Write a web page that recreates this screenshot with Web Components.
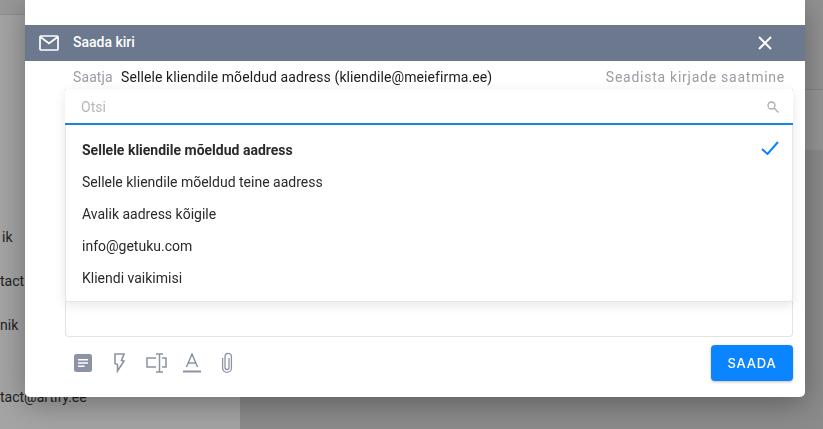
<!DOCTYPE html>
<html>
<head>
<meta charset="utf-8">
<style>
    html, body { margin: 0; height: 100%; overflow: hidden; }
    body { font-family: Roboto, 'Liberation Sans', sans-serif; }
</style>
</head>
<body>
<page-behind>
    <span style="margin-left:2px">ik</span>
    <span>tact</span>
    <span>nik</span>
    <span>tact@artify.ee</span>
</page-behind>
<mail-modal>
    <sender-menu slot="menu">
        <menu-item selected>Sellele kliendile mõeldud aadress</menu-item>
        <menu-item>Sellele kliendile mõeldud teine aadress</menu-item>
        <menu-item>Avalik aadress kõigile</menu-item>
        <menu-item>info@getuku.com</menu-item>
        <menu-item>Kliendi vaikimisi</menu-item>
    </sender-menu>
</mail-modal>

<script>
class page_Behind extends HTMLElement {
    constructor() {
        super();
        this.attachShadow({ mode: 'open' });
    }

    connectedCallback(){
        this.shadowRoot.innerHTML = `
            <style>
                :host {
                    display: flex;
                    height: 429px;
                    color: #222;
                    font-size: 14px;
                }
                .side {
                    width: 240px;
                    background: #a4a4a4;
                }
                .top {
                    height: 14px;
                    background: #989898;
                    border-bottom: 1px solid #8e8e8e;
                }
                .rows {
                    display: grid;
                    grid-template-rows: 44px 44px 72px 44px;
                    padding-top: 211px;
                    overflow: hidden;
                }
                ::slotted(span) { line-height: 22px; }
                .main {
                    flex: 1;
                    display: flex;
                    flex-direction: column;
                    background: #8b8b8b;
                }
                .bar {
                    height: 89px;
                    background: #929292;
                    border-bottom: 1px solid #848484;
                }
                .sub {
                    height: 60px;
                    background: #959595;
                }
            </style>
            <div class="side">
                <div class="top"></div>
                <div class="rows"><slot></slot></div>
            </div>
            <div class="main">
                <div class="bar"></div>
                <div class="sub"></div>
            </div>
        `;
    }
}

class mail_Modal extends HTMLElement {
    constructor() {
        super();
        this.attachShadow({ mode: 'open' });
    }

    connectedCallback(){
        this.shadowRoot.innerHTML = `
            <style>
                :host {
                    position: fixed;
                    left: 25px;
                    top: 0;
                    width: 780px;
                    height: 397px;
                    display: flex;
                    flex-direction: column;
                    background: #fff;
                    border-radius: 0 0 5px 5px;
                    box-shadow: 0 6px 30px rgba(0,0,0,.33);
                }
                .gap { height: 25px; }
                header {
                    height: 36px;
                    display: flex;
                    align-items: center;
                    background: #6b788e;
                    color: #fff;
                    font-size: 14px;
                    font-weight: 500;
                    padding: 0 32px 0 14px;
                }
                header .title { margin-left: 14px; flex: 1; padding-bottom: 2px; }
                .from {
                    height: 28px;
                    box-sizing: border-box;
                    display: flex;
                    align-items: center;
                    padding: 4px 20px 0 48px;
                    font-size: 14px;
                    color: #1c1c1c;
                }
                .from .label { color: #9a9ca3; width: 48px; letter-spacing: .1px; }
                .from .addr { flex: 1; letter-spacing: .1px; }
                .from .setup { color: #9a9ca3; letter-spacing: .75px; }
                .body {
                    position: relative;
                    margin: 0 12px 0 40px;
                    border: 1px solid #e3e3e3;
                    border-top: 0;
                    border-radius: 0 0 4px 4px;
                    height: 247px;
                    flex: none;
                }
                footer {
                    flex: 1;
                    display: flex;
                    align-items: center;
                    justify-content: space-between;
                    padding: 8px 12px 16px 49px;
                }
                .tools { display: flex; align-items: center; gap: 20px; color: #8b93a5; }
                .tools svg { display: block; }
                button {
                    width: 82px;
                    height: 36px;
                    border: 0;
                    border-radius: 4px;
                    background: #0a84ff;
                    color: #fff;
                    font: 500 13px Inter, Roboto, sans-serif;
                    letter-spacing: .8px;
                    box-shadow: 0 1px 3px rgba(0,0,0,.25);
                }
                .menu-place { position: absolute; left: -1px; right: -1px; top: 0; }
            </style>
            <div class="gap"></div>
            <header>
                <svg width="20" height="16" viewBox="0 0 20 16" fill="none" stroke="#fff" stroke-width="1.7"><rect x="1" y="1" width="18" height="14" rx="1"/><path d="M1.5 2l8.5 6.5L18.500 2"/></svg>
                <span class="title">Saada kiri</span>
                <svg width="16" height="16" viewBox="0 0 16 16" fill="none" stroke="#fff" stroke-width="2"><path d="M2 2l12 12M14 2L2 14"/></svg>
            </header>
            <div class="from">
                <span class="label">Saatja</span>
                <span class="addr">Sellele kliendile mõeldud aadress (kliendile@meiefirma.ee)</span>
                <span class="setup">Seadista kirjade saatmine</span>
            </div>
            <div class="body">
                <div class="menu-place"><slot name="menu"></slot></div>
            </div>
            <footer>
                <div class="tools">
                    <svg width="18" height="18" viewBox="0 0 18 18"><rect width="18" height="18" rx="2.500" fill="currentColor"/><path d="M4 5h10v1.600H4zM4 8.200h10v1.600H4zM4 11.400h6.500V13H4z" fill="#fff"/></svg>
                    <svg style="margin:0 1px 0 2px" width="11" height="20" viewBox="0 0 11 20" fill="none" stroke="currentColor" stroke-width="1.600"><path d="M1 1h9L7.500 7.500l2.500 0.500L3.500 18V11.500L1 10.500z"/></svg>
                    <svg width="21" height="20" viewBox="0 0 21 20" fill="none" stroke="currentColor" stroke-width="1.500"><path d="M10 5H1v9h9M16 5h4v9h-4M10 1h7M13.500 1v18M10 19h7"/></svg>
                    <svg style="margin-left:-4px" width="18" height="20" viewBox="0 0 18 20" fill="none" stroke="currentColor" stroke-width="1.500"><path d="M3.500 14L9 1l5.500 13M5.200 10h7.600"/><path d="M0 18.500h18" stroke-width="2"/></svg>
                    <svg width="12" height="22" viewBox="0 0 12 22" fill="none" stroke="currentColor" stroke-width="1.300"><path d="M8 6V15.500a2 2 0 0 1-4 0V4.500a3.200 3.200 0 0 1 6.400 0V16a4.400 4.400 0 0 1-8.800 0V6"/></svg>
                </div>
                <button>SAADA</button>
            </footer>
        `;
    }
}

class sender_Menu extends HTMLElement {
    constructor() {
        super();
        this.attachShadow({ mode: 'open' });
    }

    connectedCallback(){
        this.shadowRoot.innerHTML = `
            <style>
                :host {
                    display: block;
                    background: #fff;
                    box-shadow: 0 3px 12px rgba(0,0,0,.1);
                    border-radius: 3px;
                }
                .search {
                    height: 32px;
                    display: flex;
                    align-items: center;
                    justify-content: space-between;
                    padding: 2px 14px 0 16px;
                    border-bottom: 2px solid #1a85d6;
                    font-size: 14px;
                    color: #b4b6ba;
                }
                .list {
                    padding: 9px 0 7px;
                    border: 1px solid #e6e6e6;
                    border-width: 0 1px 1px;
                    border-radius: 0 0 3px 3px;
                    margin-bottom: -1px;
                }
            </style>
            <div class="search">
                <span>Otsi</span>
                <svg width="12" height="12" viewBox="0 0 12 12" fill="none" stroke="#a9abb0" stroke-width="1.300"><circle cx="4.500" cy="4.500" r="3.500"/><path d="M7 7l4.500 4.500"/></svg>
            </div>
            <div class="list"><slot></slot></div>
        `;
    }
}

class menu_Item extends HTMLElement {
    constructor() {
        super();
        this.attachShadow({ mode: 'open' });
    }

    connectedCallback(){
        let selected = this.hasAttribute('selected');
        this.shadowRoot.innerHTML = `
            <style>
                :host {
                    display: flex;
                    box-sizing: border-box;
                    align-items: center;
                    justify-content: space-between;
                    height: 32px;
                    padding: 0 13px 0 16px;
                    font-size: 14px;
                    color: #2a2a2a;
                    font-weight: ${selected ? 700 : 400};
                }
                svg { margin-top: -4px; }
            </style>
            <span><slot></slot></span>
            ${selected ? `<svg width="18" height="14" viewBox="0 0 18 14" fill="none" stroke="#0a84ff" stroke-width="2"><path d="M1 8l5.500 5L17 1"/></svg>` : ''}
        `;
    }
}

customElements.define('page-behind', page_Behind);
customElements.define('mail-modal', mail_Modal);
customElements.define('sender-menu', sender_Menu);
customElements.define('menu-item', menu_Item);
</script>
</body>
</html>
